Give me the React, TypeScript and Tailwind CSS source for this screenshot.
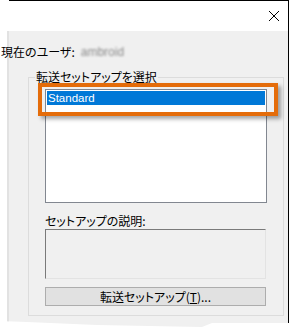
export default function App() {
  const jp = "font-['Noto_Sans_CJK_JP',sans-serif] [font-feature-settings:'palt']";

  return (
    <div className={`relative w-[290px] h-[334px] bg-white overflow-hidden text-[12px] text-black ${jp}`}>
      {/* dialog window */}
      <div className="w-[289px] h-[330px] flex flex-col [clip-path:polygon(0_0,100%_0,100%_323px,212px_323px,202px_327px,97px_325px,27px_322px,0_321px)]">
        {/* title bar */}
        <div className="ml-[9px] h-[31px] shrink-0 flex justify-end items-start bg-white border-t border-r border-black">
          <svg width="12" height="12" viewBox="0 0 12 12" className="mt-[9px] mr-[8px]">
            <path d="M1 1 L11 11 M11 1 L1 11" stroke="#000" strokeWidth="1" />
          </svg>
        </div>

        <div className="flex-1 flex flex-col border-l-[7px] border-l-white">
          <div className="flex-1 flex flex-col bg-[#f0f0f0] border-l-[2px] border-l-[#e2e2e2] border-r border-r-black">
            {/* current user */}
            <div className="-ml-[8px] mt-[13px] flex items-center h-[16px] leading-[16px]">
              <span>現在のユーザ:</span>
              <span className="ml-[6px] text-[#8a8a8a] blur-[1.2px] font-['Liberation_Sans',sans-serif]">ambroid</span>
            </div>

            {/* group box */}
            <fieldset className="ml-[19px] mt-[9px] w-[250px] border border-[#dcdcdc] px-[16px] pb-[9px]">
              <legend className="-ml-[10px] px-[1px] leading-[16px]">転送セットアップを選択</legend>

              <div className="mt-[4px] w-[222px] h-[114px] bg-white border border-[#828790] p-[1px]">
                <div className="h-[14px] bg-[#0078d7] text-white leading-[14px] pl-[1px] font-['Liberation_Sans',sans-serif] text-[11.5px]">
                  Standard
                </div>
              </div>

              <div className="mt-[10px] leading-[16px]">セットアップの説明:</div>

              <div className="w-[221px] h-[50px] bg-[#f0f0f0] border border-t-[#7a7a7a] border-l-[#7a7a7a] border-r-[#e3e3e3] border-b-[#e3e3e3]" />

              <button className="mt-[8px] w-[221px] h-[19px] bg-[#e1e1e1] border border-[#adadad] flex items-center justify-center leading-[16px]">
                転送セットアップ(<span className="underline">T</span>)...
              </button>
            </fieldset>
          </div>
        </div>
      </div>

      {/* annotation highlight */}
      <div className="absolute left-[38px] top-[83px] w-[240px] h-[33px] border-[4px] border-[#e46c0a] shadow-[3px_3px_4px_rgba(0,0,0,0.35)]" />
    </div>
  );
}
